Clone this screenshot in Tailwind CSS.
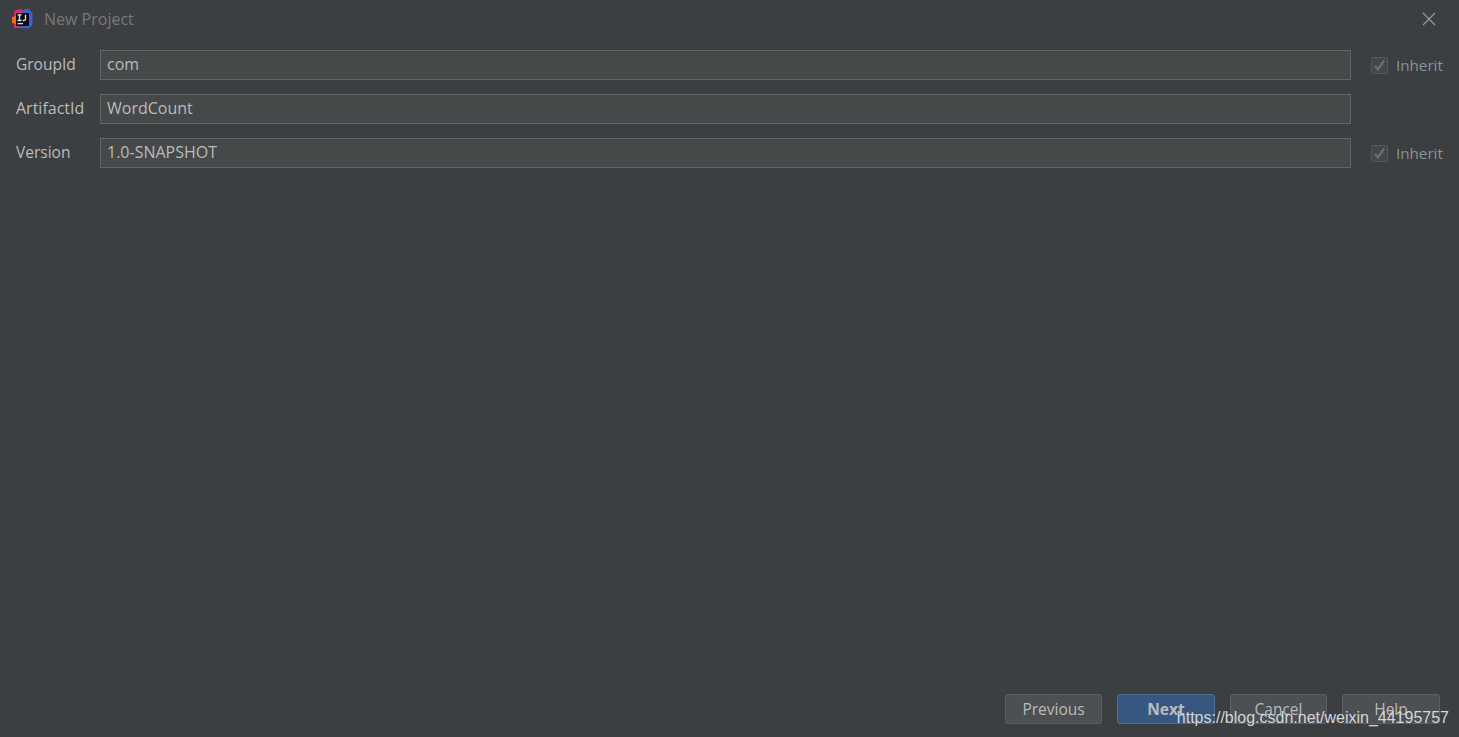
<!DOCTYPE html>
<html>
<head>
<meta charset="utf-8">
<script src="https://cdn.jsdelivr.net/npm/@tailwindcss/browser@4"></script>
</head>
<body class="m-0 overflow-hidden">
<div class="relative flex h-[737px] w-[1459px] flex-col bg-[#3c3f41] font-['Open_Sans','Noto_Sans',sans-serif] text-[15px] text-[#bbbbbb]">
  <header class="flex h-[38px] items-center pl-[11px] pr-[23px]">
    <svg width="23" height="22" viewBox="0 0 23 22" class="shrink-0">
      <path d="M3 3 L10 1 L14 5 L8 20 L3 20 Z" fill="#dd2a6b"/>
      <path d="M12 2 L17 0.5 L21.5 5 L21.5 17 L17 20.5 L8 20 Z" fill="#3f5fd8"/>
      <path d="M1 9 L5 8 L5 16 L1 15 Z" fill="#f26a1b"/>
      <rect x="5" y="5" width="13" height="13" fill="#0d0d0d"/>
      <rect x="6.5" y="15" width="5.5" height="1.3" fill="#d8d8d8"/>
      <path d="M6.5 6.8 H10.5 M8.5 6.8 V12.5 M6.5 12.5 H10.5 M14.5 6.8 V11.5 Q14.5 12.5 11.7 12.5" stroke="#e8e8e8" stroke-width="1.3" fill="none"/>
    </svg>
    <span class="ml-[10px] text-[16px] text-[#787878]">New Project</span>
    <svg width="14" height="14" viewBox="0 0 14 14" class="ml-auto">
      <path d="M1 1 L13 13 M13 1 L1 13" stroke="#9a9c9e" stroke-width="1.1" fill="none"/>
    </svg>
  </header>

  <main class="mt-3 flex flex-col gap-[14px] pl-4">
    <div class="flex h-[30px] items-center">
      <label class="w-[84px] text-[15.5px]">GroupId</label>
      <div class="flex h-full w-[1251px] items-center border border-[#646464] bg-[#45494a] pb-[2px] pl-[6px] text-[16px]">com</div>
      <div class="ml-5 flex h-[17px] w-[17px] items-center justify-center rounded-[2px] border border-[#555859] bg-[#43474a]">
        <svg width="13" height="13" viewBox="0 0 13 13"><path d="M2 7 L5 10.5 L11 1.5" stroke="#6f7274" stroke-width="2.2" fill="none"/></svg>
      </div>
      <span class="ml-2 text-[15.2px] text-[#8c9194]">Inherit</span>
    </div>
    <div class="flex h-[30px] items-center">
      <label class="w-[84px] pb-[2px] text-[16px]">ArtifactId</label>
      <div class="flex h-full w-[1251px] items-center border border-[#646464] bg-[#45494a] pb-[2px] pl-[6px] text-[16px]">WordCount</div>
    </div>
    <div class="flex h-[30px] items-center">
      <label class="w-[84px] text-[15.5px]">Version</label>
      <div class="flex h-full w-[1251px] items-center border border-[#646464] bg-[#45494a] pb-[2px] pl-[6px] text-[16px]">1.0-SNAPSHOT</div>
      <div class="ml-5 flex h-[17px] w-[17px] items-center justify-center rounded-[2px] border border-[#555859] bg-[#43474a]">
        <svg width="13" height="13" viewBox="0 0 13 13"><path d="M2 7 L5 10.5 L11 1.5" stroke="#6f7274" stroke-width="2.2" fill="none"/></svg>
      </div>
      <span class="ml-2 text-[15.2px] text-[#8c9194]">Inherit</span>
    </div>
  </main>

  <footer class="mt-auto flex justify-end gap-[15px] pb-[13px] pr-[19px] text-[15.5px]">
    <button class="h-[30px] w-[97px] rounded-[3px] border border-[#5e6060] bg-[#4c5052] pt-[2px]">Previous</button>
    <button class="h-[30px] w-[98px] rounded-[3px] border border-[#4c708c] bg-[#365880] pt-[2px] font-bold">Next</button>
    <button class="h-[30px] w-[97px] rounded-[3px] border border-[#5e6060] bg-[#4c5052] pt-[2px]">Cancel</button>
    <button class="h-[30px] w-[98px] rounded-[3px] border border-[#5e6060] bg-[#4c5052] pt-[2px]">Help</button>
  </footer>

  <span class="absolute right-[10px] top-[709px] font-['Liberation_Sans',sans-serif] text-[16px] leading-[18px] text-[#d4d6d8]">https://blog.csdn.net/weixin_44195757</span>
</div>
</body>
</html>
